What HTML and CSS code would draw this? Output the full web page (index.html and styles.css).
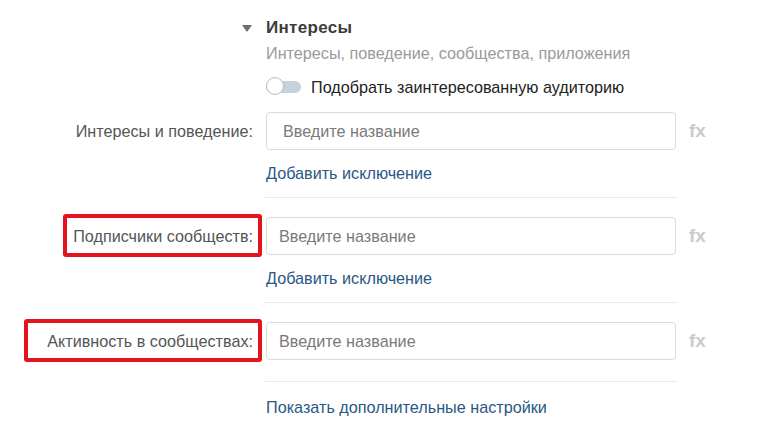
FILE: index.html
```html
<!DOCTYPE html>
<html lang="ru">
<head>
<meta charset="utf-8">
<title>Интересы</title>
<link rel="stylesheet" href="styles.css">
</head>
<body>
<div class="form">
  <div class="row head">
    <div class="col-label"><span class="tri"></span></div>
    <div class="col-field"><h3 class="title">Интересы</h3></div>
  </div>
  <div class="row sub">
    <div class="col-label"></div>
    <div class="col-field subtitle">Интересы, поведение, сообщества, приложения</div>
  </div>
  <div class="row toggle-row">
    <div class="col-label"></div>
    <div class="col-field toggle-wrap">
      <span class="toggle"><span class="knob"></span></span>
      <span class="toggle-text">Подобрать заинтересованную аудиторию</span>
    </div>
  </div>

  <div class="row field-row r1">
    <div class="col-label"><span class="label">Интересы и поведение:</span></div>
    <div class="col-field"><div class="input wide-pad">Введите название</div></div>
    <div class="col-fx">fx</div>
  </div>
  <div class="row link-row l1">
    <div class="col-label"></div>
    <div class="col-field"><a class="link">Добавить исключение</a></div>
  </div>
  <div class="row div-row d1">
    <div class="col-label"></div>
    <div class="col-field"><div class="divider"></div></div>
  </div>

  <div class="row field-row r2">
    <div class="col-label"><span class="label mark mark-a">Подписчики сообществ:</span></div>
    <div class="col-field"><div class="input">Введите название</div></div>
    <div class="col-fx">fx</div>
  </div>
  <div class="row link-row l2">
    <div class="col-label"></div>
    <div class="col-field"><a class="link">Добавить исключение</a></div>
  </div>
  <div class="row div-row d2">
    <div class="col-label"></div>
    <div class="col-field"><div class="divider"></div></div>
  </div>

  <div class="row field-row r3">
    <div class="col-label"><span class="label mark mark-b">Активность в сообществах:</span></div>
    <div class="col-field"><div class="input">Введите название</div></div>
    <div class="col-fx">fx</div>
  </div>
  <div class="row div-row d3">
    <div class="col-label"></div>
    <div class="col-field"><div class="divider"></div></div>
  </div>
  <div class="row link-row l3">
    <div class="col-label"></div>
    <div class="col-field"><a class="link">Показать дополнительные настройки</a></div>
  </div>
</div>
</body>
</html>
```

FILE: styles.css
```css
html, body {
  margin: 0;
  padding: 0;
  background: #ffffff;
}
body {
  font-family: "Liberation Sans", Arial, sans-serif;
  font-size: 16.2px;
  color: #333;
  width: 772px;
  height: 448px;
  overflow: hidden;
}
.form {
  display: flex;
  flex-direction: column;
  padding-top: 17px;
}
.row {
  display: grid;
  grid-template-columns: 254px 410px 60px;
  column-gap: 12px;
  align-items: center;
}
.col-label {
  display: flex;
  justify-content: flex-end;
  align-items: center;
}
.col-field {
  min-width: 0;
}
.col-fx {
  padding-left: 1px;
  font-size: 19px;
  font-weight: bold;
  color: #cbcbcb;
  line-height: 20px;
}

/* header */
.head { line-height: 20px; height: 20px; }
.tri {
  width: 0;
  height: 0;
  border-left: 5px solid transparent;
  border-right: 5px solid transparent;
  border-top: 7px solid #6f6f6f;
  margin-right: 2px;
  margin-top: 1px;
}
.title {
  margin: 0;
  font-size: 17px;
  font-weight: bold;
  color: #3c3c3c;
  line-height: 22px;
  letter-spacing: 0.3px;
}
.sub { margin-top: 6px; }
.subtitle {
  color: #9a9a9a;
  line-height: 20px;
}
.toggle-row { margin-top: 14px; }
.toggle-wrap {
  display: flex;
  align-items: center;
  height: 20px;
}
.toggle {
  position: relative;
  width: 35px;
  height: 12px;
  border-radius: 6px;
  background: #c5d2de;
  margin-right: 10px;
  flex: none;
}
.knob {
  position: absolute;
  left: 0;
  top: -4px;
  width: 18px;
  height: 18px;
  box-sizing: border-box;
  border-radius: 50%;
  background: #fff;
  border: 1px solid #b9bcc0;
}
.toggle-text {
  color: #222;
  line-height: 20px;
}

/* fields */
.field-row { height: 38px; }
.r1 { margin-top: 15px; }
.r2, .r3 { margin-top: 19px; }
.label {
  color: #555;
  line-height: 20px;
  position: relative;
  margin-right: 1px;
  white-space: nowrap;
}
.input {
  height: 38px;
  box-sizing: border-box;
  border: 1px solid #d6dbe0;
  border-radius: 4px;
  padding: 0 12px;
  line-height: 36px;
  color: #7a7a7a;
  background: #fff;
}
.input.wide-pad { padding-left: 16px; }

.link-row { line-height: 20px; }
.l1, .l2 { margin-top: 13px; }
.l3 { margin-top: 15px; }
.link {
  color: #2a5885;
  text-decoration: none;
  cursor: pointer;
}
.div-row { height: 1px; }
.d1, .d2 { margin-top: 14px; }
.d3 { margin-top: 21px; }
.divider {
  height: 1px;
  background: #e7e8ec;
  margin-left: -1px;
  width: 412px;
}

/* red annotation boxes */
.mark::after {
  content: "";
  position: absolute;
  top: -12px;
  bottom: -11px;
  right: -9px;
  border: 4px solid #e3141e;
  border-radius: 3px;
  pointer-events: none;
}
.mark-a::after { left: -10px; }
.mark-b::after { left: -23px; }
```
